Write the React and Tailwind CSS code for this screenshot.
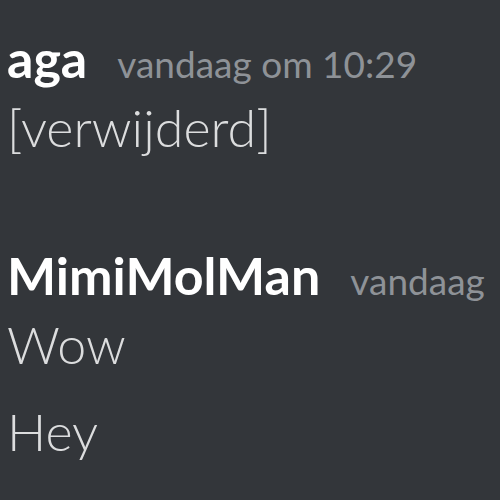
import React from 'react';

// Berichten zoals in de schermafbeelding
const groups = [
    {
        user: 'aga',
        time: 'vandaag om 10:29',
        lines: ['[verwijderd]'],
    },
    {
        user: 'MimiMolMan',
        time: 'vandaag',
        lines: ['Wow', 'Hey'],
    },
];

function MessageGroup({ group, first }) {
    return (
        <div className={first ? 'pt-[27px]' : 'mt-[86px]'}>
            <div className="flex h-[62px] items-baseline whitespace-nowrap">
                <span className="text-[52px] leading-[62px] font-bold text-white">{group.user}</span>
                <span className="ml-[30px] text-[37px] leading-none text-[#8e9297]">{group.time}</span>
            </div>
            {group.lines.map((line, i) => (
                <div
                    key={i}
                    className={`text-[52px] font-light leading-[62px] text-[#dcddde] ${
                        i === 0 ? 'mt-[7px]' : 'mt-[25px]'
                    }`}
                >
                    {line}
                </div>
            ))}
        </div>
    );
}

export default function App() {
    return (
        <div
            className="h-[500px] w-[500px] overflow-hidden bg-[#33363a] pl-[7px]"
            style={{ fontFamily: 'Lato, "Open Sans", sans-serif' }}
        >
            {groups.map((g, i) => (
                <MessageGroup key={g.user} group={g} first={i === 0} />
            ))}
        </div>
    );
}
